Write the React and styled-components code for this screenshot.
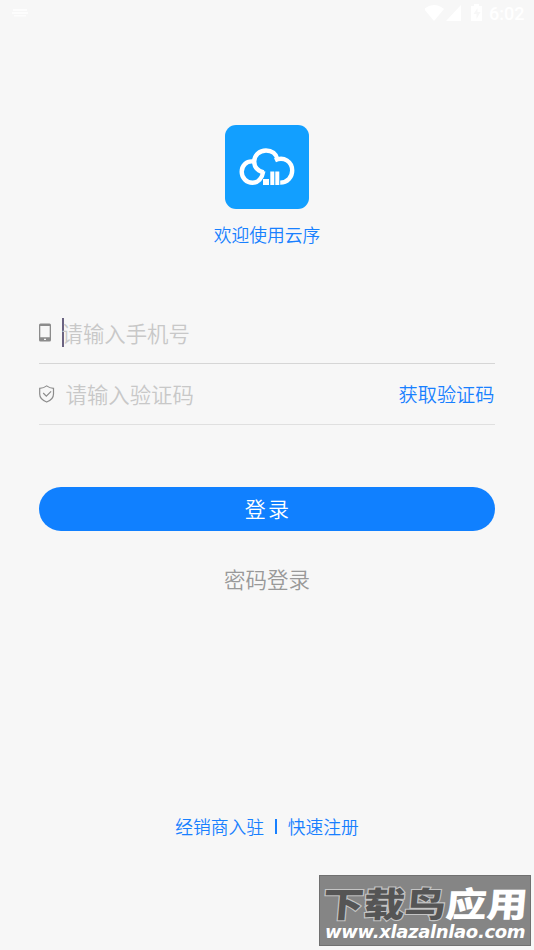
import React from "react";
import styled, { createGlobalStyle } from "styled-components";

const Global = createGlobalStyle`
  * { box-sizing: border-box; }
  body { margin: 0; background: #f7f7f7; }
`;

const Screen = styled.main`
  position: relative;
  display: flex;
  flex-direction: column;
  width: 534px;
  height: 950px;
  overflow: hidden;
  background: #f7f7f7;
  font-family: "Noto Sans CJK SC", sans-serif;
  font-weight: 350;
`;

const StatusBar = styled.header`
  display: flex;
  justify-content: space-between;
  height: 27px;
  flex: none;
  color: #fff;
`;

const StatusIcons = styled.div`
  display: flex;
  padding-right: 9px;
`;

const Clock = styled.time`
  width: 36px;
  font: 500 18px/27px Roboto, sans-serif;
  white-space: nowrap;
`;

const Brand = styled.section`
  display: flex;
  flex-direction: column;
  align-items: center;
  padding-top: 98px;
  height: 275px;
  flex: none;
`;

const Welcome = styled.h1`
  margin: 11px 0 0;
  font-size: 17.8px;
  line-height: 28px;
  font-weight: 350;
  color: #1880ff;
`;

const Form = styled.form`
  display: flex;
  flex-direction: column;
  margin: 0 39px;
`;

const Field = styled.label`
  display: flex;
  align-items: center;
  height: ${(p) => p.$height}px;
  border-bottom: 1px solid ${(p) => p.$line};
`;

const IconSlot = styled.span`
  display: flex;
  width: ${(p) => p.$width}px;
  flex: none;
`;

const Caret = styled.span`
  width: 2px;
  height: 29px;
  margin-right: -2px;
  background: #6b6381;
`;

const Placeholder = styled.span`
  flex: 1;
  font-size: 21.4px;
  line-height: 32px;
  color: #c8c8c8;
`;

const CodeLink = styled.span`
  font-size: 19.2px;
  line-height: 30px;
  padding-right: 0.5px;
  color: #1880ff;
`;

const Submit = styled.button`
  height: 44px;
  margin-top: 62px;
  padding: 0 0 2px 2px;
  border: 0;
  border-radius: 22px;
  background: #1080ff;
  color: #fff;
  font: 350 21px/42px "Noto Sans CJK SC", sans-serif;
  letter-spacing: 2.2px;
`;

const PasswordLogin = styled.span`
  margin-top: 32px;
  text-align: center;
  font-size: 21.5px;
  line-height: 32px;
  color: #999;
`;

const Links = styled.nav`
  display: flex;
  align-items: center;
  justify-content: center;
  margin-top: 217px;
  height: 28px;
  font-size: 17.8px;
  line-height: 28px;
  color: #1880ff;
`;

const Divider = styled.span`
  width: 1.5px;
  height: 15px;
  margin: 0 11px;
  background: #1880ff;
`;

const Watermark = styled.aside`
  position: absolute;
  left: 319px;
  top: 875px;
  width: 212px;
  height: 71px;
  padding-top: 7px;
  background: #858585;
  border: 1px solid #707070;
`;

const MarkTitle = styled.div`
  display: flex;
  padding-left: 3px;
  height: 39px;
  font-size: 41px;
  line-height: 39px;
  font-weight: 900;
  white-space: nowrap;
`;

const MarkWord = styled.span`
  transform: skewX(-5deg) scaleY(0.84);
  color: ${(p) => (p.$light ? "#fff" : "#555")};
  -webkit-text-stroke: ${(p) => (p.$light ? "0" : "2.5px #c4c4c4")};
  paint-order: stroke fill;
`;

const MarkUrl = styled.div`
  padding-left: 5px;
  font: italic 700 18px/20px "DejaVu Sans", sans-serif;
  letter-spacing: -0.35px;
  color: #fff;
  white-space: nowrap;
`;

const LogoIcon = () => (
  <svg width="84" height="84" viewBox="0 0 84 84">
    <rect width="84" height="84" rx="11" fill="#129fff" />
    <g fill="none" stroke="#fff" strokeWidth="4.4">
      <path d="M29 36.600C21 35.300 16.700 41 16.700 46.800C16.700 53 21.600 57.800 27.500 57.800C33 57.800 37.200 53.500 38.300 46.200" />
      <path d="M38.600 47.300C32 45.500 29.200 41 29.200 36.400C29.200 30.200 34.500 25.500 41 25.500C46.800 25.500 51.300 28.800 52.500 34.400" />
      <path d="M50 35.200C59 30.800 67.200 37 67.200 45.500C67.200 52 62.500 57.600 55.200 57.600" />
    </g>
    <path d="M38 54h6v6h-6zM45.300 46.500h4v13.500h-4zM50.300 46.500h4v13.500h-4z" fill="#fff" />
  </svg>
);

const PhoneIcon = () => (
  <svg width="12" height="19" viewBox="0 0 12 19">
    <path fillRule="evenodd" fill="#8c8c8c" d="M1.500.5h9Q12 .5 12 2v15q0 1.500-1.500 1.500h-9Q0 18.500 0 17V2Q0 .5 1.500.5ZM1.300 3v11.200h9.400V3ZM5 15.700v1.200h2v-1.200Z" />
  </svg>
);

const ShieldIcon = () => (
  <svg width="16" height="18" viewBox="0 0 16 18" fill="none" stroke="#8c8c8c" strokeWidth="1.2">
    <path d="M7.700.9Q10.500 3.200 14.500 3.300V9Q14.500 14.500 7.700 17Q.7 14.500.7 9V3.300Q4.800 3.200 7.700.9Z" />
    <path d="M4.200 8l3.100 3.100 4.800-4.800" />
  </svg>
);

export default function App() {
  return (
    <Screen>
      <Global />
      <StatusBar>
        <svg width="40" height="27" fill="#fff">
          <path d="M13 9h14v2H13zM12 12h16v2H12zM14 15h12v1.500H14z" opacity=".7" />
        </svg>
        <StatusIcons>
          <svg width="64" height="27" fill="#fff">
            <path d="M-1 9Q9 1 19 9L9 21ZM36 5v16H21ZM46 6h3V4h5v2h3v15H46Z" />
            <path d="M52.500 8l-4 6h3v5l4-7h-3Z" fill="#f7f7f7" />
          </svg>
          <Clock>6:02</Clock>
        </StatusIcons>
      </StatusBar>
      <Brand>
        <LogoIcon />
        <Welcome>欢迎使用云序</Welcome>
      </Brand>
      <Form>
        <Field $height={62} $line="#d6d6d6">
          <IconSlot $width={22.5}><PhoneIcon /></IconSlot>
          <Caret />
          <Placeholder>请输入手机号</Placeholder>
        </Field>
        <Field $height={61} $line="#e0e0e0">
          <IconSlot $width={26.5}><ShieldIcon /></IconSlot>
          <Placeholder>请输入验证码</Placeholder>
          <CodeLink>获取验证码</CodeLink>
        </Field>
        <Submit type="button">登录</Submit>
        <PasswordLogin>密码登录</PasswordLogin>
      </Form>
      <Links>
        <span>经销商入驻</span>
        <Divider />
        <span>快速注册</span>
      </Links>
      <Watermark>
        <MarkTitle>
          <MarkWord>下载鸟</MarkWord>
          <MarkWord $light>应用</MarkWord>
        </MarkTitle>
        <MarkUrl>www.xlazalnlao.com</MarkUrl>
      </Watermark>
    </Screen>
  );
}
